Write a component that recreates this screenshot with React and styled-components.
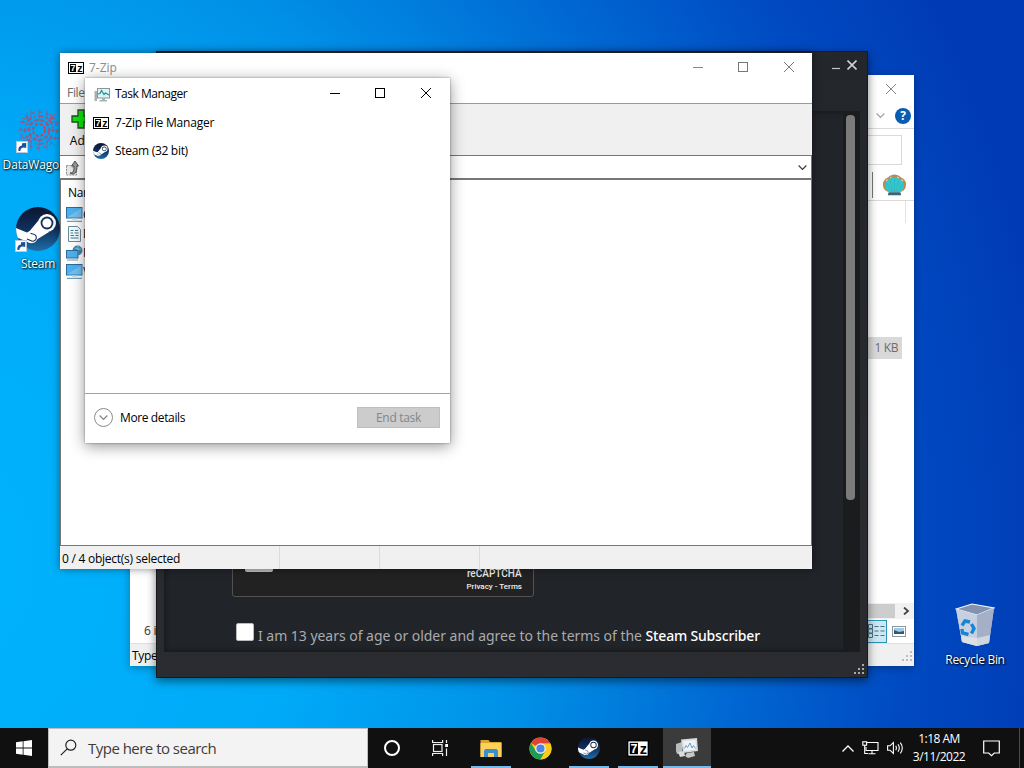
import React from "react";
import styled, { createGlobalStyle } from "styled-components";

const GlobalStyle = createGlobalStyle`
  * {
    box-sizing: border-box;
  }
  body {
    margin: 0;
    overflow: hidden;
    font-family: "Open Sans", "Noto Sans", sans-serif;
    font-size: 12px;
    color: #000;
  }
  svg {
    display: block;
    flex: none;
  }
`;

//icons

const SevenZip = ({ w = 16, h = 12 }) => (
  <svg width={w} height={h} viewBox="0 0 32 24" preserveAspectRatio="none">
    <rect width="32" height="24" fill="#000" />
    <rect x="2" y="2" width="28" height="20" fill="#fff" />
    <rect x="4" y="4" width="12" height="16" fill="#000" />
    <text x="5" y="18.500" fontFamily="Liberation Sans" fontWeight="bold" fontSize="18" fill="#fff">7</text>
    <text x="18.500" y="20" fontFamily="Liberation Sans" fontWeight="bold" fontSize="21" fill="#000">z</text>
  </svg>
);

const SteamLogo = ({ size, id }) => (
  <svg width={size} height={size} viewBox="0 0 44 44">
    <defs>
      <linearGradient id={id} x1="0" y1="0" x2="0" y2="1">
        <stop offset="0" stopColor="#0c1530" />
        <stop offset="0.5" stopColor="#10305e" />
        <stop offset="1" stopColor="#1f6ea8" />
      </linearGradient>
      <clipPath id={id + "c"}>
        <circle cx="22" cy="22" r="22" />
      </clipPath>
    </defs>
    <circle cx="22" cy="22" r="22" fill={`url(#${id})`} />
    <g clipPath={`url(#${id}c)`}>
      <path d="M0 21 L12 26 L22 14 L33 25 L20 33 L14 36 L0 30z" fill="#fff" />
      <circle cx="31" cy="16" r="9" fill="#fff" />
      <circle cx="31" cy="16" r="6.4" fill="#16305a" />
      <circle cx="31" cy="16" r="4.6" fill="#fff" />
      <circle cx="15.5" cy="30" r="6.2" fill="#fff" />
      <path d="M11 32 l3.500 1.400 a3.600 3.600 0 1 0 2-6.400 l-2-.8" fill="none" stroke="#16305a" strokeWidth="1.100" />
    </g>
  </svg>
);

const ShortcutArrow = () => (
  <svg width="12" height="12" viewBox="0 0 12 12">
    <rect x="0.5" y="0.5" width="11" height="11" fill="#fff" stroke="#b9c9da" />
    <path d="M2.5 10 C2 7 3.5 4.8 6 4.6 V2.2 L10.2 2 V7 L8 6.4 C5.5 6.4 4.4 7.6 4.4 10z" fill="#1c4f9c" />
  </svg>
);

const DataWagonLogo = () => (
  <svg width="44" height="44" viewBox="0 0 44 44" fill="none" stroke="#b8476a">
    <circle cx="22" cy="22" r="6" strokeWidth="2" strokeDasharray="3 1.700" />
    <circle cx="22" cy="22" r="10" strokeWidth="2.400" strokeDasharray="4 2" opacity="0.8" />
    <circle cx="22" cy="22" r="14" strokeWidth="1.600" strokeDasharray="2 3 5 2" opacity="0.8" />
    <circle cx="22" cy="22" r="18" strokeWidth="1.600" strokeDasharray="3 4" opacity="0.7" />
    <path
      d="M14 2v8l-4 3M22 1v12M30 2v8l4 3M14 42v-8l-4-3M22 43V31M30 42v-8l4-3M2 14h8l3 4M1 22h12M2 30h8l3-4M42 14h-8l-3 4M43 22H31M42 30h-8l-3-4M6 6l9 9M38 6l-9 9M6 38l9-9M38 38l-9-9M5 10l6 1M10 5l1 6M39 10l-6 1M34 5l-1 6M5 34l6-1M10 39l1-6"
      opacity="0.7"
    />
  </svg>
);

const RecycleIcon = () => (
  <svg width="40" height="44" viewBox="0 0 40 44">
    <path d="M1 6 L17 1 L39 5 L34 40 L22 43 L7 39z" fill="#bcc6d6" />
    <path d="M1 6 L17 1 L39 5 L22 12z" fill="#8493ad" stroke="#eef3fa" strokeWidth="1.200" />
    <path d="M1 6 L22 12 L22 43 L7 39z" fill="#c6d0e0" />
    <path d="M22 12 L39 5 L34 40 L22 43z" fill="#a3b0c8" />
    <path d="M6 33 L22 35 L35 32 L34 40 L22 43 L7 39z" fill="#e6e6e4" opacity="0.7" />
    <g fill="none" stroke="#1884d6" strokeWidth="3.400">
      <path d="M7 22.500l3-4.500 5 1" />
      <path d="M16.500 21l2.500 4.500-2.500 5" />
      <path d="M13.500 31.500l-6-1.500-.6-4" />
    </g>
  </svg>
);

const Caption = ({ kind, color = "#000" }) => (
  <svg width="10" height="10" viewBox="0 0 10 10" fill="none" stroke={color}>
    {kind === "min" && <path d="M0 5.500H10" />}
    {kind === "max" && <rect x="0.5" y="0.5" width="9" height="9" />}
    {kind === "close" && <path d="M0 0L10 10M10 0L0 10" />}
  </svg>
);

const Chevron = ({ w = 8, color = "#444", sw = 1.2 }) => (
  <svg width={w} height={w / 2 + 1} viewBox="0 0 8 5" fill="none" stroke={color} strokeWidth={sw}>
    <path d="M0.500 0.500L4 4L7.500 0.500" />
  </svg>
);

const MonitorIcon = () => (
  <svg width="17" height="15" viewBox="0 0 17 15">
    <rect x="0.500" y="0.500" width="15.500" height="10.500" fill="#4fb0ee" stroke="#2a6c9c" />
    <path d="M1 10.500L15.500 1v9.500z" fill="#8ccdf6" opacity="0.6" />
    <path d="M6 11.500h5v1.500H6z" fill="#cfdbe4" />
    <path d="M1 14.300h15" stroke="#4b8ab0" />
  </svg>
);

const DocIcon = () => (
  <svg width="17" height="16" viewBox="0 0 17 16">
    <path d="M2.500 0.500h9l3 3v12h-12z" fill="#f6fbfd" stroke="#6d8996" />
    <path d="M4.500 4.500h3M9 4.500h3M4.500 7h2.500M8.500 7h4M4.500 9.500h3.500M9.500 9.500h3M4.500 12h8" stroke="#2f7f9f" strokeWidth="1.200" />
  </svg>
);

const NetworkIcon = () => (
  <svg width="17" height="16" viewBox="0 0 17 16">
    <circle cx="11.500" cy="5.500" r="5" fill="#3b87b5" />
    <path d="M9 3q3 2 6 1M12 1v9" stroke="#8dc8e4" fill="none" />
    <rect x="0.500" y="5.500" width="11.500" height="7.500" fill="#4fb0ee" stroke="#2a6c9c" />
    <path d="M1 15h11" stroke="#7396aa" />
  </svg>
);

const TaskMgrIcon = () => (
  <svg width="16" height="15" viewBox="0 0 16 15">
    <path d="M0.500 4h2.500v10h-2.500z" fill="#a8b0b2" />
    <rect x="3.500" y="1.500" width="12" height="9.500" fill="#d9f5f5" stroke="#8a9698" />
    <path d="M4 7l2-.5 1.500-3 2.500 4 1.500-1.500 3.500 2" fill="none" stroke="#2b8d93" strokeWidth="1.200" />
    <path d="M8 11h3v2h2v1.500H5.500V13H8z" fill="#a8b0b2" />
  </svg>
);

const TaskMgrBig = () => (
  <svg width="24" height="22" viewBox="0 0 24 22">
    <path d="M1 7l6-2v11l-5 1-1-3z" fill="#b9bcbd" />
    <path d="M3 15l6-1 1 5-5 1z" fill="#dcdcdc" />
    <path d="M6 2.500L22 1l1 13L8 16z" fill="#d8dadb" />
    <path d="M8 4L20.500 3l.8 9.500L9.500 14z" fill="#eef3f8" />
    <path d="M9.500 11.500l1.500-3 1.500 2L15 6l2 5 1.500-2.500 2 3" fill="none" stroke="#5b97c4" strokeWidth="0.900" />
    <path d="M12 16l7-1 1 4-7 2-3-2z" fill="#c5c7c8" />
  </svg>
);

const ShellIcon = () => (
  <svg width="25" height="22" viewBox="0 0 25 22">
    <path d="M6 21l1-3C2 17 .5 13 1 9c.7-3 3-5 5-5.500C8 1.300 10.500.6 12.500.6S17 1.300 19 3.500c2 .5 4.300 2.500 5 5.500.5 4-1 8-6 9l1 3z" fill="#b98a5c" />
    <path d="M7.500 18.500C4 16.500 3 13 3.500 10c1-4 5-6.500 9-6.500s8 2.500 9 6.500c.5 3-.5 6.500-4 8.500z" fill="#35c6cc" />
    <path d="M12.500 5v13M8 6l3 12M17 6l-3 12M4.500 9.500L9.500 18M20.500 9.500L15.500 18" stroke="#2db4c0" strokeWidth="0.700" fill="none" />
    <path d="M6.500 18.500h12l.6 2.700H5.900z" fill="#37667f" />
    <path d="M4 7l1.500-1.500M8 3.800l1.500-.8M15 3l2 .8M19.500 5.500L21 7" stroke="#e0cf9a" strokeWidth="1.300" />
  </svg>
);

const ChromeIcon = () => (
  <svg width="23" height="23" viewBox="0 0 48 48">
    <circle cx="24" cy="24" r="23" fill="#f9c80e" />
    <path d="M24 24L4.100 12.500A23 23 0 0 1 43.900 12.500L44 14H24z" fill="#dc4437" />
    <path d="M4.100 12.500A23 23 0 0 0 24 47l10-17.500-10-5.500-9.500 5.500z" fill="#1b9c57" />
    <path d="M24 13.500h20.400A23 23 0 0 1 24 47l9.500-17z" fill="#fbcb1c" />
    <circle cx="24" cy="24" r="11" fill="#f1f1f1" />
    <circle cx="24" cy="24" r="8.500" fill="#4a86e8" />
  </svg>
);

const FolderIcon = () => (
  <svg width="22" height="19" viewBox="0 0 22 19">
    <path d="M0.500 1h8l1.500 2h11.500v15h-21z" fill="#d9a52c" />
    <path d="M0.500 4h21v14h-21z" fill="#fbd15b" />
    <path d="M4 18v-6.500l1.500-1.500h11l1.500 1.500V18h-4v-4H8v4z" fill="#3d8fcc" />
  </svg>
);

const TaskViewIcon = () => (
  <svg width="17" height="16" viewBox="0 0 17 16" fill="none" stroke="#eee" strokeWidth="1.200">
    <path d="M0.600 0v2.500h10V0M0.600 16v-2.500h10V16" />
    <rect x="1.500" y="4.500" width="8.500" height="7" />
    <path d="M14.500 0v3M14.500 8.500v7.500" />
    <rect x="13.200" y="4" width="2.800" height="3" fill="#fff" stroke="none" />
  </svg>
);

const WindowsLogo = () => (
  <svg width="16" height="16" viewBox="0 0 16 16" fill="#fff">
    <path d="M0 2.300L6.700 1.300v6.300H0zM7.500 1.200L16 0v7.600H7.500zM0 8.400h6.700v6.300L0 13.700zM7.500 8.400H16V16l-8.500-1.200z" />
  </svg>
);

const NetTray = () => (
  <svg width="17" height="14" viewBox="0 0 17 14" fill="none" stroke="#fff" strokeWidth="1.100">
    <path d="M5 1.500h11v8H4V6M10 9.500v3M6.500 12.700h7" />
    <rect x="0.800" y="0.800" width="3.800" height="3.400" />
    <path d="M2.700 4v8.500H6" />
  </svg>
);

const SpeakerIcon = () => (
  <svg width="17" height="14" viewBox="0 0 17 14" fill="none" stroke="#fff" strokeWidth="1.100">
    <path d="M0.600 4.800h2.400L6.400 1.500v11L3 9.200H0.600z" />
    <path d="M8.700 4.800q1.400 2.200 0 4.400M11 3.200q2.600 3.800 0 7.600M13.300 1.600q4 5.400 0 10.800" />
  </svg>
);

const Grip = ({ color }) => (
  <svg width="11" height="11" viewBox="0 0 11 11" fill={color}>
    <path d="M8 0h2v2H8zM8 4h2v2H8zM8 8h2v2H8zM4 4h2v2H4zM4 8h2v2H4zM0 8h2v2H0z" />
  </svg>
);

//shared parts

const Text = styled.span`
  font-size: ${(p) => p.$size || 12}px;
  letter-spacing: ${(p) => p.$ls ?? -0.3}px;
  color: ${(p) => p.$color || "#000"};
  white-space: nowrap;
  line-height: 16px;
`;

const Desktop = styled.div`
  position: relative;
  width: 1024px;
  height: 768px;
  overflow: hidden;
  display: flex;
  flex-direction: column;
  justify-content: flex-end;
  background: radial-gradient(ellipse 1200px 1300px at -80px 560px, #00b4fc 0%, #00aaf8 32%, #0092e8 50%, #006bd4 67%, #004bc2 82%, #003ab4 96%);
`;

const Window = styled.section`
  position: absolute;
  left: ${(p) => p.$x}px;
  top: ${(p) => p.$y}px;
  width: ${(p) => p.$w}px;
  height: ${(p) => p.$h}px;
  display: flex;
  flex-direction: column;
  overflow: hidden;
  background: #fff;
`;

const Shortcut = styled.div`
  position: absolute;
  left: ${(p) => p.$x}px;
  top: ${(p) => p.$y}px;
  width: 76px;
  display: flex;
  flex-direction: column;
  align-items: center;
  gap: ${(p) => p.$gap || 5}px;
`;

const Artwork = styled.div`
  position: relative;
`;

const Badge = styled.div`
  position: absolute;
  left: -1px;
  bottom: -1px;
`;

const ShortcutName = styled(Text)`
  color: #fff;
  text-shadow: 1px 1px 2px #000, 0 0 2px rgba(0, 0, 0, 0.8);
`;

//file explorer window

const ExplorerWindow = styled(Window)`
  box-shadow: 0 2px 8px rgba(0, 0, 0, 0.3);
`;

const ExplorerRow = styled.div`
  height: ${(p) => p.$h}px;
  flex: none;
  display: flex;
  align-items: center;
  justify-content: flex-end;
  gap: ${(p) => p.$gap || 0}px;
  padding: 0 ${(p) => p.$pr || 0}px ${(p) => p.$pb || 0}px 0;
  border-bottom: ${(p) => (p.$line ? "1px solid #dadada" : "0")};
`;

const SearchBox = styled.div`
  width: 180px;
  height: 30px;
  border: 1px solid #d9d9d9;
`;

const ToolDivider = styled.div`
  width: 1px;
  height: 26px;
  background: #777;
`;

const FileList = styled.div`
  flex: 1;
  display: flex;
  flex-direction: column;
  align-items: flex-end;
`;

const ColumnEdge = styled.div`
  width: 9px;
  height: 22px;
  border-left: 1px solid #e3e3e3;
`;

const SelectedFile = styled.div`
  width: 700px;
  height: 22px;
  margin: 114px 12px 0 0;
  padding-right: 4px;
  background: #d9d9d9;
  text-align: right;
  line-height: 22px;
`;

const HScroll = styled.div`
  width: 640px;
  height: 16px;
  margin-left: auto;
  display: flex;
  align-items: center;
  justify-content: space-between;
  background: #f1f1f1;
  padding-right: 4px;
`;

const HThumb = styled.div`
  width: 621px;
  height: 14px;
  background: #cdcdcd;
`;

const ViewRow = styled.div`
  height: 24px;
  display: flex;
  align-items: center;
  padding: 0 8px 0 14px;
`;

const DetailsButton = styled.div`
  width: 22px;
  height: 23px;
  margin-left: auto;
  margin-right: 5px;
  border: 1px solid #2a94b8;
  background: #cbe8f3;
  display: grid;
  place-items: center;
`;

const ExplorerStatus = styled.div`
  height: 23px;
  display: flex;
  align-items: center;
  justify-content: space-between;
  padding: 2px 1px 0 2px;
  background: #f0f0f0;
  border-top: 1px solid #e0e0e0;
`;

const HelpBadge = styled.div`
  width: 16px;
  height: 16px;
  border-radius: 50%;
  background: #0a5cb0;
  color: #fff;
  font-weight: 700;
  font-size: 12px;
  line-height: 16px;
  text-align: center;
`;

function Explorer() {
  return (
    <ExplorerWindow $x={130} $y={75} $w={784} $h={591}>
      <ExplorerRow $h={29} $pr={18} $pb={2}>
        <Caption kind="close" color="#888" />
      </ExplorerRow>
      <ExplorerRow $h={25} $pr={3} $gap={10} $line>
        <Chevron w={9} color="#a5a5a5" />
        <HelpBadge>?</HelpBadge>
      </ExplorerRow>
      <ExplorerRow $h={41} $pr={12}>
        <SearchBox />
      </ExplorerRow>
      <ExplorerRow $h={31} $pr={7} $gap={9} $line>
        <ToolDivider />
        <ShellIcon />
      </ExplorerRow>
      <FileList>
        <ColumnEdge />
        <SelectedFile>
          <Text $color="#6d6d6d" $ls={-0.4}>1 KB</Text>
        </SelectedFile>
      </FileList>
      <HScroll>
        <HThumb />
        <svg width="7" height="8" viewBox="0 0 7 8" fill="none" stroke="#444" strokeWidth="1.800">
          <path d="M1 0.500L5 4L1 7.500" />
        </svg>
      </HScroll>
      <ViewRow>
        <Text $color="#333">6 items</Text>
        <DetailsButton>
          <svg width="17" height="14" viewBox="0 0 17 14" fill="none" stroke="#4b6f82">
            <path d="M0.500 0.500h4v4h-4zM0.500 5h4v4h-4zM0.500 9.500h4v4h-4zM6.500 2.500h4M12.500 2.500h4M6.500 7h4M12.500 7h4M6.500 11.500h4M12.500 11.500h4" />
          </svg>
        </DetailsButton>
        <svg width="14" height="11" viewBox="0 0 14 11">
          <rect x="0.500" y="0.500" width="13" height="10" fill="#fff" stroke="#8a979f" />
          <rect x="2" y="2" width="10" height="6" fill="#9ccbe6" />
          <path d="M2 4l5 2 5-1v3H2z" fill="#33586e" />
        </svg>
      </ViewRow>
      <ExplorerStatus>
        <Text>Type: Text Document</Text>
        <Grip color="#bcbcbc" />
      </ExplorerStatus>
    </ExplorerWindow>
  );
}

//steam window

const SteamWindow = styled(Window)`
  background: linear-gradient(#23262b, #2a2c30);
  border: 1px solid #17191c;
  box-shadow: 0 3px 9px rgba(0, 0, 0, 0.5);
  padding: 0 7px;
`;

const SteamTitle = styled.div`
  height: 59px;
  display: flex;
  justify-content: flex-end;
  gap: 7px;
  padding: 8px 3px 0 0;
`;

const SteamBody = styled.div`
  flex: 1;
  display: flex;
  background: #212429;
  box-shadow: inset 0 0 4px 2px #191b1e;
`;

const SteamPage = styled.div`
  flex: 1;
  display: flex;
  flex-direction: column;
  justify-content: flex-end;
  align-items: flex-start;
  padding: 0 0 4px 68px;
`;

const ScrollTrack = styled.div`
  width: 16px;
  padding: 4px 0 0 3px;
  background: #1b1c1e;
  margin-right: 1px;
`;

const ScrollThumb = styled.div`
  width: 9px;
  height: 385px;
  border-radius: 4px;
  background: #7b7b7b;
`;

const Captcha = styled.div`
  width: 302px;
  height: 78px;
  border: 1px solid #525252;
  border-radius: 3px;
  background: #222;
  display: flex;
  justify-content: space-between;
  align-items: flex-end;
  padding: 0 11px 3px 12px;
  font-family: Roboto, sans-serif;
  color: #ededed;
`;

const CaptchaBox = styled.div`
  width: 28px;
  height: 28px;
  border-radius: 2px;
  background: #c1c1c1;
  margin-bottom: 21px;
`;

const CaptchaNote = styled.div`
  text-align: center;
  font-size: ${(p) => p.$size}px;
  line-height: ${(p) => p.$lh}px;
  font-weight: 500;
`;

const AgreeRow = styled.div`
  display: flex;
  align-items: center;
  margin: 26px 0 0 4px;
  font-family: "Noto Sans", sans-serif;
`;

const AgreeBox = styled.div`
  width: 18px;
  height: 18px;
  background: #fff;
  border: 1px solid #bbb;
  border-radius: 2px;
  margin: 0 4px 7px 0;
`;

const AgreeText = styled.div`
  font-size: 14px;
  line-height: 22px;
  letter-spacing: -0.03px;
  color: #a9abad;
  white-space: nowrap;
  b {
    color: #fff;
    font-weight: 500;
    letter-spacing: -0.18px;
  }
`;

const SteamFoot = styled.div`
  height: 25px;
  display: flex;
  justify-content: flex-end;
  align-items: flex-end;
  padding-bottom: 2px;
  margin-right: -5px;
`;

function Steam() {
  return (
    <SteamWindow $x={156} $y={51} $w={712} $h={627}>
      <SteamTitle>
        <svg width="8" height="10" viewBox="0 0 8 10">
          <path d="M0 8.500h8" stroke="#c4c5c6" strokeWidth="1.200" />
        </svg>
        <svg width="10" height="10" viewBox="0 0 10 10">
          <path d="M0.500 0.500l9 9M9.500 0.500l-9 9" stroke="#d0d1d2" strokeWidth="1.600" />
        </svg>
      </SteamTitle>
      <SteamBody>
        <SteamPage>
          <Captcha>
            <CaptchaBox />
            <div>
              <CaptchaNote $size={10} $lh={12}>reCAPTCHA</CaptchaNote>
              <CaptchaNote $size={8} $lh={13}>Privacy - Terms</CaptchaNote>
            </div>
          </Captcha>
          <AgreeRow>
            <AgreeBox />
            <AgreeText>
              I am 13 years of age or older and agree to the terms of the <b>Steam Subscriber</b>
            </AgreeText>
          </AgreeRow>
        </SteamPage>
        <ScrollTrack>
          <ScrollThumb />
        </ScrollTrack>
      </SteamBody>
      <SteamFoot>
        <Grip color="#a9a9a9" />
      </SteamFoot>
    </SteamWindow>
  );
}

//7-Zip window

const ZipWindow = styled(Window)`
  box-shadow: 0 0 8px rgba(0, 0, 0, 0.45);
`;

const ZipTitle = styled.div`
  height: 29px;
  display: flex;
  align-items: center;
  gap: 5px;
  padding: 0 18px 0 8px;
`;

const CaptionGroup = styled.div`
  display: flex;
  gap: 35px;
  margin: 0 0 2px auto;
  svg:last-child {
    margin-left: 1px;
  }
`;

const MenuBar = styled.div`
  height: 22px;
  padding: 2px 7px 0;
  border-bottom: 1px solid #9b9b9b;
`;

const ToolBar = styled.div`
  height: 52px;
  background: #f0f0f0;
  border-bottom: 1px solid #777;
  padding: 5px 0 0 8px;
`;

const ToolButton = styled.div`
  width: 26px;
  display: flex;
  flex-direction: column;
  align-items: center;
  gap: 4px;
`;

const AddressBar = styled.div`
  height: 24px;
  display: flex;
  align-items: center;
  justify-content: space-between;
  padding: 1px 4px 0 6px;
  border-right: 1px solid #777;
  border-bottom: 2px solid #777;
`;

const ZipList = styled.div`
  flex: 1;
  border: solid #777;
  border-width: 0 1px 1px;
  padding: 3px 0 0 5px;
`;

const ListHead = styled.div`
  height: 22px;
  padding: 1px 0 0 2px;
`;

const ListRow = styled.div`
  height: 19px;
  display: flex;
  align-items: center;
`;

const StatusBar = styled.div`
  height: 23px;
  display: flex;
  align-items: stretch;
  background: #f0f0f0;
`;

const StatusCell = styled.div`
  width: ${(p) => p.$w}px;
  border-right: 1px solid #dcdcdc;
  padding: 5px 0 0 2px;
  line-height: 16px;
`;

const places = [
  { name: "Computer", icon: <MonitorIcon /> },
  { name: "Documents", icon: <DocIcon /> },
  { name: "Network", icon: <NetworkIcon /> },
  { name: "\\\\.", icon: <MonitorIcon /> },
];

function ZipManager() {
  return (
    <ZipWindow $x={60} $y={53} $w={752} $h={516}>
      <ZipTitle>
        <SevenZip />
        <Text $color="#8c8c8c" $ls={0}>7-Zip</Text>
        <CaptionGroup>
          <Caption kind="min" color="#888" />
          <Caption kind="max" color="#777" />
          <Caption kind="close" color="#777" />
        </CaptionGroup>
      </ZipTitle>
      <MenuBar>
        <Text $color="#6d6d6d">File</Text>
      </MenuBar>
      <ToolBar>
        <ToolButton>
          <svg width="20" height="20" viewBox="0 0 20 20">
            <path d="M7 1h6v6h6v6h-6v6H7v-6H1V7h6z" fill="#0ce60c" stroke="#1f4a1f" strokeWidth="1.300" />
          </svg>
          <Text $ls={0}>Add</Text>
        </ToolButton>
      </ToolBar>
      <AddressBar>
        <svg width="14" height="16" viewBox="0 0 14 16">
          <path d="M0.500 5.500h4l1 1.500h5v8h-10z" fill="#e6e6e6" stroke="#8c8c8c" strokeDasharray="2 1" />
          <path d="M4 13c4 0 4-3 4-7H5.500L9 1l3.500 5H11c0 5-1 8-5 8z" fill="#9a9a9a" stroke="#444" strokeWidth="0.900" />
        </svg>
        <Chevron w={9} />
      </AddressBar>
      <ZipList>
        <ListHead>
          <Text>Name</Text>
        </ListHead>
        {places.map((p) => (
          <ListRow key={p.name}>
            {p.icon}
            <Text>{p.name}</Text>
          </ListRow>
        ))}
      </ZipList>
      <StatusBar>
        <StatusCell $w={220}>
          <Text $ls={-0.25}>0 / 4 object(s) selected</Text>
        </StatusCell>
        <StatusCell $w={100} />
        <StatusCell $w={100} />
      </StatusBar>
    </ZipWindow>
  );
}

//task manager window

const TaskWindow = styled(Window)`
  box-shadow: 0 3px 14px rgba(0, 0, 0, 0.42), 0 0 2px rgba(0, 0, 0, 0.4);
`;

const TaskTitle = styled.div`
  height: 30px;
  display: flex;
  align-items: center;
  gap: 5px;
  padding: 2px 19px 0 9px;
`;

const TaskList = styled.div`
  flex: 1;
  border-bottom: 1px solid #a0a0a0;
  padding-top: 1px;
`;

const TaskRow = styled.div`
  height: 28px;
  display: flex;
  align-items: center;
  gap: 6px;
  padding-left: 8px;
`;

const TaskFooter = styled.div`
  height: 49px;
  display: flex;
  align-items: center;
  justify-content: space-between;
  padding: 0 10px 2px 9px;
`;

const MoreDetails = styled.div`
  display: flex;
  align-items: center;
  gap: 7px;
`;

const RoundToggle = styled.div`
  width: 19px;
  height: 19px;
  border: 1px solid #8a8a8a;
  border-radius: 50%;
  display: grid;
  place-items: center;
`;

const EndTask = styled.div`
  width: 83px;
  height: 21px;
  background: #ccc;
  border: 1px solid #bfbfbf;
  display: grid;
  place-items: center;
`;

function TaskManager() {
  return (
    <TaskWindow $x={85} $y={78} $w={365} $h={365}>
      <TaskTitle>
        <TaskMgrIcon />
        <Text $ls={-0.5}>Task Manager</Text>
        <CaptionGroup>
          <Caption kind="min" />
          <Caption kind="max" />
          <Caption kind="close" />
        </CaptionGroup>
      </TaskTitle>
      <TaskList>
        <TaskRow>
          <SevenZip />
          <Text $ls={-0.2}>7-Zip File Manager</Text>
        </TaskRow>
        <TaskRow>
          <SteamLogo size={16} id="steam-row" />
          <Text>Steam (32 bit)</Text>
        </TaskRow>
      </TaskList>
      <TaskFooter>
        <MoreDetails>
          <RoundToggle>
            <Chevron w={9} color="#888" />
          </RoundToggle>
          <Text $ls={-0.38}>More details</Text>
        </MoreDetails>
        <EndTask>
          <Text $color="#83868b">End task</Text>
        </EndTask>
      </TaskFooter>
    </TaskWindow>
  );
}

//taskbar

const Bar = styled.footer`
  height: 40px;
  display: flex;
  align-items: stretch;
  background: #101010;
`;

const BarButton = styled.div`
  width: ${(p) => p.$w || 49}px;
  display: grid;
  place-items: center;
  background-color: ${(p) => (p.$active ? "#3b3b3b" : "transparent")};
`;

const AppButton = styled(BarButton)`
  background-image: ${(p) => (p.$open ? "linear-gradient(#76b9ed, #76b9ed)" : "none")};
  background-repeat: no-repeat;
  background-position: bottom;
  background-size: ${(p) => (p.$active ? "100%" : "40px")} 2px;
`;

const SearchField = styled.div`
  width: 320px;
  display: flex;
  align-items: center;
  gap: 11px;
  padding-left: 11px;
  background: #f3f3f3;
  border: 1px solid #bdbdbd;
  border-width: 1px 1px 2px;
`;

const Ring = styled.div`
  width: 16px;
  height: 16px;
  border: 2px solid #fff;
  border-radius: 50%;
`;

const Tray = styled.div`
  margin-left: auto;
  display: flex;
  align-items: center;
  color: #fff;
`;

const Clock = styled.div`
  width: 60px;
  margin: 0 14px 0 5px;
  display: flex;
  flex-direction: column;
  align-items: center;
  gap: 2px;
`;

const TrayIcons = styled.div`
  display: flex;
  align-items: center;
  gap: 8px;
`;

const ShowDesktop = styled.div`
  width: 5px;
  height: 40px;
  margin-left: 19px;
  border-left: 1px solid #4a4a4a;
`;

function Taskbar() {
  return (
    <Bar>
      <BarButton $w={48}>
        <WindowsLogo />
      </BarButton>
      <SearchField>
        <svg width="17" height="17" viewBox="0 0 17 17" fill="none" stroke="#222" strokeWidth="1.200">
          <circle cx="10.800" cy="6.200" r="5" />
          <path d="M7.200 9.800L0.800 16.200" />
        </svg>
        <Text $size={15} $color="#3c3c3c" $ls={-0.52}>Type here to search</Text>
      </SearchField>
      <BarButton $w={48}>
        <Ring />
      </BarButton>
      <BarButton $w={49}>
        <TaskViewIcon />
      </BarButton>
      <AppButton $w={51} $open>
        <FolderIcon />
      </AppButton>
      <AppButton $w={48}>
        <ChromeIcon />
      </AppButton>
      <AppButton $open>
        <SteamLogo size={22} id="steam-bar" />
      </AppButton>
      <AppButton $w={50} $open>
        <SevenZip w={22} h={17} />
      </AppButton>
      <AppButton $w={48} $open $active>
        <TaskMgrBig />
      </AppButton>
      <Tray>
        <TrayIcons>
          <svg width="12" height="7" viewBox="0 0 12 7" fill="none" stroke="#fff" strokeWidth="1.300">
            <path d="M0.500 6.500L6 1L11.500 6.500" />
          </svg>
          <NetTray />
          <SpeakerIcon />
        </TrayIcons>
        <Clock>
          <Text $color="#fff" $ls={-0.5}>1:18 AM</Text>
          <Text $color="#fff" $ls={-0.5}>3/11/2022</Text>
        </Clock>
        <svg width="17" height="17" viewBox="0 0 17 17" fill="none" stroke="#fff" strokeWidth="1.200">
          <path d="M0.700 1h15.600v12h-5L8.500 15.700 5.700 13h-5z" />
        </svg>
        <ShowDesktop />
      </Tray>
    </Bar>
  );
}

function App() {
  return (
    <>
      <GlobalStyle />
      <Desktop>
        <Shortcut $x={1} $y={108}>
          <Artwork>
            <DataWagonLogo />
            <Badge>
              <ShortcutArrow />
            </Badge>
          </Artwork>
          <ShortcutName $ls={-0.15}>DataWagon...</ShortcutName>
        </Shortcut>
        <Shortcut $x={0} $y={207}>
          <Artwork>
            <SteamLogo size={44} id="steam-desktop" />
            <Badge>
              <ShortcutArrow />
            </Badge>
          </Artwork>
          <ShortcutName>Steam</ShortcutName>
        </Shortcut>
        <Shortcut $x={937} $y={603}>
          <RecycleIcon />
          <ShortcutName>Recycle Bin</ShortcutName>
        </Shortcut>
        <Explorer />
        <Steam />
        <ZipManager />
        <TaskManager />
        <Taskbar />
      </Desktop>
    </>
  );
}

export default App;
